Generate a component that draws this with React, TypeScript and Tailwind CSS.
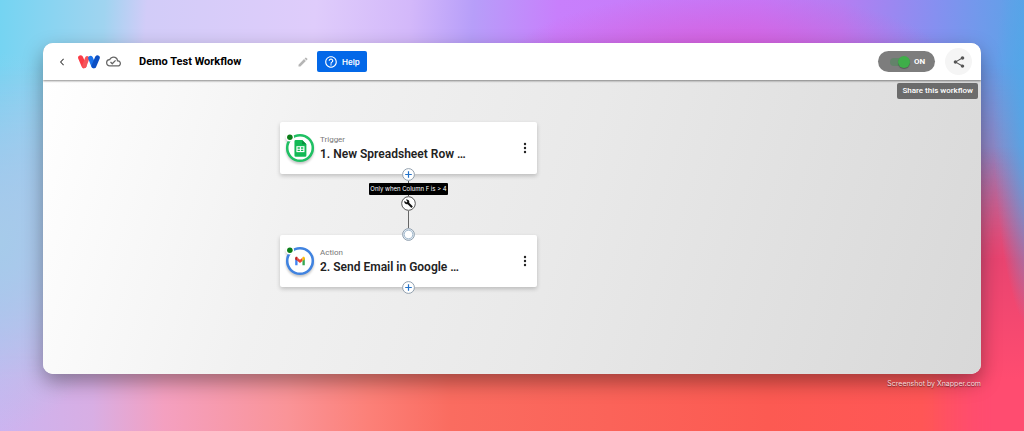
import React, { useState } from 'react';

interface WorkflowStep {
  id: string;
  kind: string;
  title: string;
  ringColor: string;
  icon: React.ReactNode;
}

function SheetsIcon() {
  return (
    <g>
      <path d="M11 7.5h6l4 4v10.6a1.2 1.2 0 0 1-1.2 1.2H11a1.2 1.2 0 0 1-1.2-1.2V8.7A1.2 1.2 0 0 1 11 7.5z" fill="#12b954" />
      <path d="M17 7.5l4 4h-4z" fill="#0b8f3e" />
      <path d="M11.6 13.3h7.6v5.6h-7.6z" fill="#fff" />
      <path d="M12.7 14.3h2.2v1.3h-2.2zM15.9 14.3h2.2v1.3h-2.2zM12.7 16.6h2.2v1.3h-2.2zM15.9 16.6h2.2v1.3h-2.2z" fill="#12b954" />
    </g>
  );
}

function GmailIcon() {
  return (
    <g>
      <path d="M10.5 12.3v6.6h2.2v-5z" fill="#4285f4" />
      <path d="M17.3 13.9v5h2.2v-6.6z" fill="#34a853" />
      <path d="M12.7 12v3l2.3 1.8 2.3-1.8v-3L15 13.8z" fill="#ea4335" />
      <path d="M10.5 12.4c0-1.2 1.2-1.7 2.2-1v3.7l-2.2-1.6z" fill="#c5221f" />
      <path d="M19.5 12.4c0-1.2-1.2-1.7-2.2-1v3.7l2.2-1.6z" fill="#fbbc04" />
    </g>
  );
}

const steps: WorkflowStep[] = [
  { id: 'trigger', kind: 'Trigger', title: '1. New Spreadsheet Row …', ringColor: '#1fc063', icon: <SheetsIcon /> },
  { id: 'action', kind: 'Action', title: '2. Send Email in Google …', ringColor: '#4083e0', icon: <GmailIcon /> },
];

function Logo() {
  return (
    <svg viewBox="0 0 22 14" className="h-3.5 w-[22px]" fill="none" strokeLinecap="round" aria-hidden="true">
      <path d="M2.6 2.8L6 10.8" stroke="#fb3b45" strokeWidth="5" />
      <path d="M9.2 3.2L6.4 10.8" stroke="#f5555b" strokeWidth="4.4" />
      <path d="M12.6 3.2L15.6 10.8" stroke="#1a72ea" strokeWidth="4.8" />
      <path d="M19.4 2.8L16 10.8" stroke="#0c4fc4" strokeWidth="4.8" />
    </svg>
  );
}

function StepCard({ step }: { step: WorkflowStep }) {
  return (
    <section className="flex h-[52px] w-[257px] items-center rounded-xs bg-white pl-1 pr-1.5 shadow-[0_2px_4px_rgba(0,0,0,0.2)]">
      <svg viewBox="0 0 30 30" className="size-8 shrink-0 overflow-visible drop-shadow-[0_2px_1px_rgba(0,0,0,0.22)]" aria-hidden="true">
        <circle cx="15" cy="15" r="12" fill="#fff" stroke={step.ringColor} strokeWidth="2.4" />
        {step.icon}
        <circle cx="5.5" cy="5" r="4" fill="#fff" />
        <circle cx="5.5" cy="5" r="2.6" fill="#0b7d18" />
      </svg>
      <div className="ml-1 min-w-0 flex-1">
        <p className="text-[8px] leading-3 text-[#777]">{step.kind}</p>
        <h2 className="truncate text-[12px] leading-4 font-semibold text-[#222]">{step.title}</h2>
      </div>
      <button type="button" aria-label={`${step.kind} options`} className="px-1 py-2">
        <svg viewBox="0 0 4 12" className="h-3 w-1" fill="#222" aria-hidden="true">
          <circle cx="2" cy="2" r="1.2" />
          <circle cx="2" cy="6" r="1.2" />
          <circle cx="2" cy="10" r="1.2" />
        </svg>
      </button>
    </section>
  );
}

function AddStepButton() {
  return (
    <button type="button" aria-label="Add step" className="size-[13px] shrink-0">
      <svg viewBox="0 0 13 13" className="size-[13px]" aria-hidden="true">
        <circle cx="6.5" cy="6.5" r="5.9" fill="#fff" stroke="#8796a6" strokeWidth="0.9" />
        <path d="M6.5 3.2v6.6M3.2 6.5h6.6" stroke="#2372c8" strokeWidth="1.2" />
      </svg>
    </button>
  );
}

function Connector() {
  return (
    <div className="z-10 -my-1.5 flex flex-col items-center">
      <AddStepButton />
      <span className="h-0.5 w-px bg-[#555]" />
      <span className="rounded-[1px] bg-black px-px text-[6px] leading-3 text-white font-[Inter,sans-serif]">
        Only when Column F is &gt; 4
      </span>
      <span className="h-px w-px bg-[#555]" />
      <button type="button" aria-label="Edit condition" className="size-[15px]">
        <svg viewBox="0 0 15 15" className="size-[15px]" aria-hidden="true">
          <circle cx="7.5" cy="7.5" r="6.8" fill="#fff" stroke="#444" strokeWidth="0.9" />
          <g transform="translate(3 3) scale(0.38)">
            <path
              d="M22.7 19l-9.1-9.1c.9-2.3.4-5-1.5-6.9-2-2-5-2.4-7.4-1.3L9 6 6 9 1.6 4.7C.4 7.1.9 10.1 2.9 12.1c1.9 1.9 4.6 2.4 6.9 1.5l9.1 9.1c.4.4 1 .4 1.4 0l2.3-2.3c.5-.4.5-1.1.1-1.4z"
              fill="#111"
            />
          </g>
        </svg>
      </button>
      <span className="h-[17px] w-px bg-[#666]" />
      <svg viewBox="0 0 13 13" className="size-[13px]" aria-hidden="true">
        <circle cx="6.5" cy="6.5" r="5.9" fill="#e4edf5" stroke="#8796a6" strokeWidth="0.9" />
        <circle cx="6.5" cy="6.5" r="4.3" fill="#fff" stroke="#8fa9c2" strokeWidth="0.8" />
      </svg>
    </div>
  );
}

export default function App() {
  const [name, setName] = useState('Demo Test Workflow');
  const [enabled, setEnabled] = useState(true);

  return (
    <div className="relative isolate flex min-h-screen flex-col bg-[linear-gradient(94deg,#74d4f2_0%,#a0d4f0_10%,#d2ccf8_14%,#dfccfb_30%,#d3b8fa_39%,#b79ef9_45%,#c87ffc_53%,#c578f8_72%,#b47ef2_80%,#8590f0_89%,#62a0e8_96%,#58a3e6_100%)] px-[43px] pt-[43px] font-[Roboto,sans-serif]">
      {/* Backdrop colours */}
      <div className="absolute inset-0 -z-10 bg-[radial-gradient(ellipse_22%_18%_at_71%_16%,#dc58d4,transparent)]" />
      <div className="absolute inset-0 -z-10 bg-[linear-gradient(90deg,#ccb4f0_0%,#d8aee4_9%,#f4a0c0_16%,#fa9498_28%,#fc8078_36%,#fa6c60_44%,#fc5a52_75%,#ff5656_90%,#ff4a78_100%)] mask-[linear-gradient(180deg,transparent_15%,black_88%)]" />
      <div className="absolute inset-0 -z-10 bg-[linear-gradient(180deg,transparent_34%,#e84470_60%,#ff4c70_88%)] mask-[linear-gradient(90deg,transparent_91%,black_97%)]" />
      <div className="absolute inset-0 -z-10 bg-[radial-gradient(ellipse_5%_52%_at_102%_28%,#4fa8e8_30%,transparent)]" />
      <div className="absolute inset-0 -z-10 bg-[radial-gradient(ellipse_12%_44%_at_0%_56%,#a6cbea,transparent)]" />

      <main className="flex flex-1 flex-col overflow-hidden rounded-[10px] bg-white shadow-[0_8px_20px_rgba(0,0,0,0.36)]">
        <header className="z-10 flex h-[37px] items-center bg-white pl-4 pr-[9px] shadow-[0_1px_2px_rgba(0,0,0,0.45)]">
          <button type="button" aria-label="Back">
            <svg viewBox="0 0 6 10" className="h-2 w-1.5" fill="none" stroke="#444" strokeWidth="1.3" aria-hidden="true">
              <path d="M5 1L1.3 5 5 9" />
            </svg>
          </button>
          <a href="#" aria-label="Home" className="ml-[13px]">
            <Logo />
          </a>
          <svg viewBox="0 0 24 24" className="ml-1.5 size-[15px]" fill="#666" aria-label="Saved">
            <path d="M19.35 10.04A7.49 7.49 0 0 0 12 4C9.11 4 6.6 5.64 5.35 8.04A5.994 5.994 0 0 0 0 14c0 3.31 2.69 6 6 6h13c2.76 0 5-2.24 5-5 0-2.64-2.05-4.78-4.65-4.96zM19 18H6c-2.21 0-4-1.79-4-4s1.79-4 4-4h.71C7.37 7.69 9.48 6 12 6c3.04 0 5.5 2.46 5.5 5.5v.5H19c1.66 0 3 1.34 3 3s-1.34 3-3 3zm-9-3.82l-2.09-2.09L6.5 13.5 10 17l6.01-6.01-1.41-1.41z" />
          </svg>
          <input
            aria-label="Workflow name"
            value={name}
            onChange={e => setName(e.target.value)}
            className="ml-[18px] w-[158px] min-w-0 text-[11px] leading-4 font-bold text-black outline-none"
          />
          <button type="button" aria-label="Rename workflow">
            <svg viewBox="0 0 24 24" className="size-3" fill="#b5b5b5" aria-hidden="true">
              <path d="M3 17.25V21h3.75L17.81 9.94l-3.75-3.75L3 17.25zM20.71 7.04a1 1 0 0 0 0-1.41l-2.34-2.34a1 1 0 0 0-1.41 0l-1.83 1.83 3.75 3.75 1.83-1.83z" />
            </svg>
          </button>
          <button type="button" className="ml-2 flex h-[21px] items-center gap-1 rounded-xs bg-[#0368e8] px-[7px] text-[8px] font-semibold text-white font-[Inter,sans-serif]">
            <svg viewBox="0 0 24 24" className="size-3.5" fill="currentColor" aria-hidden="true">
              <path d="M11 18h2v-2h-2v2zm1-16C6.48 2 2 6.48 2 12s4.48 10 10 10 10-4.48 10-10S17.52 2 12 2zm0 18c-4.41 0-8-3.59-8-8s3.59-8 8-8 8 3.59 8 8-3.59 8-8 8zm0-14c-2.21 0-4 1.79-4 4h2c0-1.1.9-2 2-2s2 .9 2 2c0 2-3 1.75-3 5h2c0-2.25 3-2.5 3-5 0-2.21-1.79-4-4-4z" />
            </svg>
            Help
          </button>

          <label className="ml-auto flex h-[21px] w-[57px] items-center gap-1 rounded-full bg-[#7d7d7d] pl-3 text-[8px] font-bold text-white">
            <input type="checkbox" checked={enabled} onChange={e => setEnabled(e.target.checked)} className="peer sr-only" />
            <span className="flex h-2 w-5 items-center rounded-full bg-[#63836a] peer-checked:justify-end" aria-hidden="true">
              <span className="size-3 shrink-0 rounded-full bg-[#3fae49] shadow-[0_1px_1px_rgba(0,0,0,0.3)]" />
            </span>
            {enabled ? 'ON' : 'OFF'}
          </label>
          <button type="button" aria-describedby="share-tip" aria-label="Share" className="ml-2.5 flex size-[27px] items-center justify-center rounded-full bg-[#f5f5f5]">
            <svg viewBox="0 0 24 24" className="size-3.5" fill="#555" aria-hidden="true">
              <path d="M18 16.08c-.76 0-1.44.3-1.96.77L8.91 12.7c.05-.23.09-.46.09-.7s-.04-.47-.09-.7l7.05-4.11c.54.5 1.25.81 2.04.81 1.66 0 3-1.34 3-3s-1.34-3-3-3-3 1.34-3 3c0 .24.04.47.09.7L8.04 9.81C7.5 9.31 6.79 9 6 9c-1.66 0-3 1.34-3 3s1.34 3 3 3c.79 0 1.5-.31 2.04-.81l7.12 4.16c-.05.21-.08.43-.08.65 0 1.61 1.31 2.92 2.92 2.92s2.92-1.31 2.92-2.92-1.31-2.92-2.92-2.92z" />
            </svg>
          </button>
        </header>

        <div className="relative flex flex-1 flex-col items-start bg-[linear-gradient(108deg,#ffffff_0%,#f1f1f1_28%,#e9e9e9_55%,#d8d8d8_100%)] pt-[42px] pl-[237px]">
          <div className="flex flex-col items-center">
            <StepCard step={steps[0]} />
            <Connector />
            <StepCard step={steps[1]} />
            <div className="-mt-1.5 flex">
              <AddStepButton />
            </div>
          </div>
          <span id="share-tip" role="tooltip" className="absolute top-[3px] right-[3px] rounded-xs bg-[#6b6b6b] px-[5px] text-[8px] leading-4 font-medium text-white">
            Share this workflow
          </span>
        </div>
      </main>

      <footer className="flex h-[57px] justify-end pt-1 text-[7px] leading-3 text-[#f6dcdc] font-[Inter,sans-serif] text-shadow-[0_1px_1px_rgba(0,0,0,0.5)]">
        Screenshot by Xnapper.com
      </footer>
    </div>
  );
}
